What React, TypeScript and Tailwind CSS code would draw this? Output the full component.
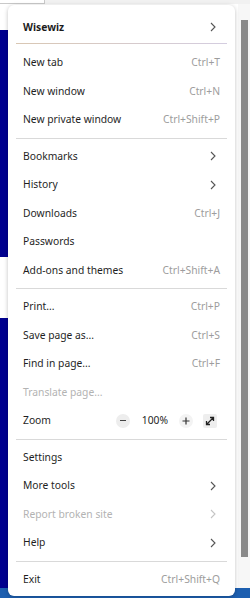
import React from 'react';

type Item = {
  label: string;
  shortcut?: string;
  sub?: boolean;
  disabled?: boolean;
  bold?: boolean;
};

const groups: Item[][] = [
  [
    { label: 'New tab', shortcut: 'Ctrl+T' },
    { label: 'New window', shortcut: 'Ctrl+N' },
    { label: 'New private window', shortcut: 'Ctrl+Shift+P' },
  ],
  [
    { label: 'Bookmarks', sub: true },
    { label: 'History', sub: true },
    { label: 'Downloads', shortcut: 'Ctrl+J' },
    { label: 'Passwords' },
    { label: 'Add-ons and themes', shortcut: 'Ctrl+Shift+A' },
  ],
  [
    { label: 'Print...', shortcut: 'Ctrl+P' },
    { label: 'Save page as...', shortcut: 'Ctrl+S' },
    { label: 'Find in page...', shortcut: 'Ctrl+F' },
    { label: 'Translate page...', disabled: true },
  ],
  [
    { label: 'Settings' },
    { label: 'More tools', sub: true },
    { label: 'Report broken site', sub: true, disabled: true },
    { label: 'Help', sub: true },
  ],
  [{ label: 'Exit', shortcut: 'Ctrl+Shift+Q' }],
];

const Chevron = ({ faded }: { faded?: boolean }) => (
  <svg width="6" height="10" viewBox="0 0 6 10" className="mr-[4px]">
    <path d="M1 1 L5 5 L1 9" fill="none" stroke={faded ? '#c4c4c4' : '#555'} strokeWidth="1.1" />
  </svg>
);

const Row = ({ item }: { item: Item }) => (
  <div className="h-[28.5px] flex items-center justify-between pl-[15px] pr-[15px]">
    <span
      className={
        item.bold
          ? 'font-bold text-[#1c1c1c]'
          : item.disabled
          ? 'text-[#b3b3b3]'
          : 'text-[#1f1f1f]'
      }
    >
      {item.label}
    </span>
    {item.shortcut && <span className="text-[#9d9d9d]">{item.shortcut}</span>}
    {item.sub && <Chevron faded={item.disabled} />}
  </div>
);

const Sep = () => <div className="mx-[8px] my-[3.5px] h-px bg-[#d9d9d9]" />;

const ZoomRow = () => (
  <div className="h-[28.5px] flex items-center justify-between pl-[15px] pr-[18px]">
    <span className="text-[#1f1f1f]">Zoom</span>
    <div className="flex items-center">
      <div className="w-[14px] h-[14px] rounded-full bg-[#ededed] flex items-center justify-center">
        <div className="w-[6px] h-px bg-[#444]" />
      </div>
      <span className="ml-[12px] text-[#1f1f1f]">100%</span>
      <div className="ml-[11px] w-[14px] h-[14px] rounded-full bg-[#f3f3f3] flex items-center justify-center">
        <svg width="8" height="8" viewBox="0 0 8 8">
          <path d="M4 0.5 V7.5 M0.5 4 H7.5" stroke="#333" strokeWidth="1.2" />
        </svg>
      </div>
      <div className="ml-[10px] w-[14px] h-[14px] rounded-[2px] bg-[#eeeeee] flex items-center justify-center">
        <svg width="10" height="10" viewBox="0 0 10 10">
          <path d="M1.5 8.5 L8.5 1.5 M5 1.5 H8.5 V5 M1.5 5 V8.5 H5" fill="none" stroke="#222" strokeWidth="1.3" />
        </svg>
      </div>
    </div>
  </div>
);

const App: React.FC = () => {
  return (
    <div
      className="relative w-[250px] h-[598px] overflow-hidden bg-white flex flex-col"
      style={{ fontFamily: '"Noto Sans", "Open Sans", sans-serif' }}
    >
      {/* page behind the menu */}
      <div className="h-[4px] bg-[#f1f1f1] flex">
        <div className="w-[45px] border-r border-b border-[#c9c9c9] bg-white" />
      </div>
      <div className="flex-1 flex">
        <div className="w-[8px] flex flex-col">
          <div className="h-[26px]" />
          <div className="h-[227px] bg-[#00008f]" />
          <div className="h-[61px]" />
          <div className="flex-1 bg-[#00008f]" />
        </div>
        <div className="flex-1" />
        <div className="w-[12px] flex flex-col bg-[#f7f7f7] pt-[16px] pb-[31px]">
          <div className="ml-[3px] w-[7px] flex-1 bg-[#8a8a8a]" />
        </div>
      </div>
      <div className="h-[10px] bg-[#1d5fb0]" />

      {/* menu popup */}
      <div className="absolute left-[8px] top-[5px] w-[227px] pt-[8px] pb-[2px] bg-white rounded-[6px] shadow-[0_1px_4px_rgba(0,0,0,0.25)] text-[10.3px]">
        <Row item={{ label: 'Wisewiz', bold: true, sub: true }} />
        <div className="mx-[8px] mt-[1px] mb-[5px] h-px bg-gradient-to-r from-[#d9c7b3] to-[#d4cde0]" />
        {groups.map((g, i) => (
          <React.Fragment key={i}>
            {i > 0 && <Sep />}
            {g.map((item) => (
              <Row key={item.label} item={item} />
            ))}
            {i === 2 && <ZoomRow />}
          </React.Fragment>
        ))}
      </div>
    </div>
  );
};

export default App;
